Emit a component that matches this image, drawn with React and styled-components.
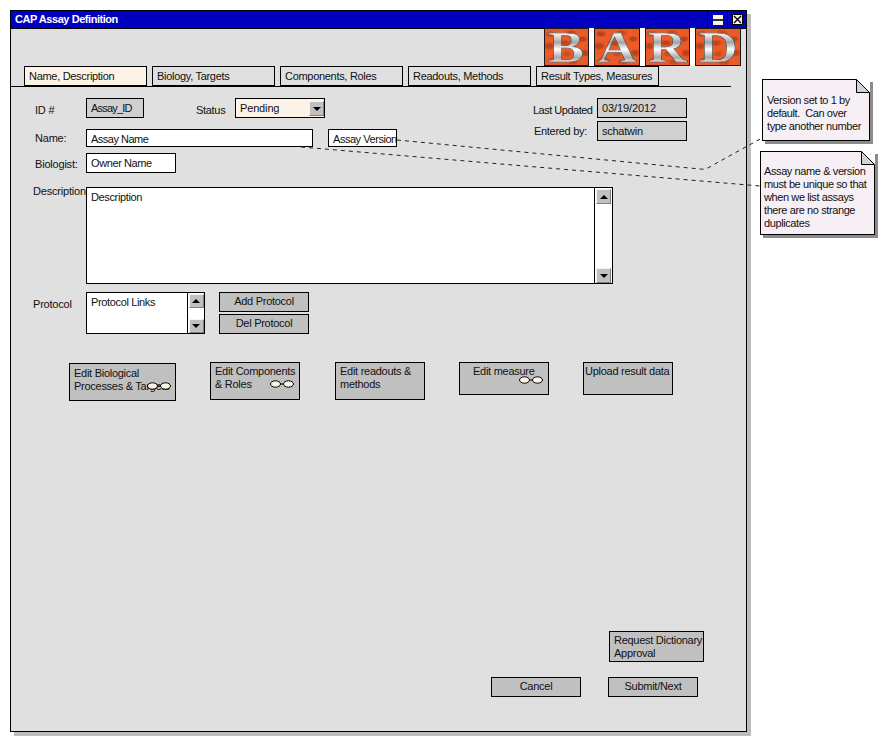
import React from "react";
import styled, { createGlobalStyle } from "styled-components";

const Global = createGlobalStyle`
  html, body { margin: 0; padding: 0; background: #fff; }
  body { font-family: "Liberation Sans", Arial, sans-serif; font-size: 11px; color: #111; }
  * { box-sizing: border-box; }
`;

const Canvas = styled.div`
  position: relative;
  width: 884px;
  height: 741px;
  padding: 10px 0 0 10px;
  overflow: hidden;
`;

const Window = styled.div`
  width: 737px;
  height: 722px;
  border: 1px solid #000;
  background: #e0e0e0;
  box-shadow: 4px 4px 0 #bdbdbd;
  display: flex;
  flex-direction: column;
`;

const TitleBar = styled.div`
  flex: none;
  height: 18px;
  background: #0000c0;
  border-bottom: 1px solid #000;
  display: flex;
  align-items: stretch;
  padding-left: 4px;
`;

const Title = styled.div`
  flex: 1;
  color: #fff;
  font-weight: bold;
  letter-spacing: -0.45px;
  line-height: 17px;
`;

const WinControl = styled.div`
  flex: none;
  width: ${(p) => p.$w}px;
  border-left: 1px solid #000;
  display: flex;
  align-items: center;
  justify-content: center;
`;

const Header = styled.div`
  flex: none;
  height: 37px;
  display: flex;
  justify-content: flex-end;
  padding-right: 5px;
`;

const Logo = styled.div`
  display: flex;
  gap: 5px;
  height: 38px;
  margin-top: -1px;
  background: #fff;
`;

const Tile = styled.div`
  width: ${(p) => p.$w}px;
  height: 38px;
  border: 1px solid #1a1a1a;
  display: flex;
  align-items: center;
  justify-content: center;
  background-color: #ec5a28;
  background-image:
    radial-gradient(ellipse 7px 4px at 6px 5px, #b8431c 40%, transparent 85%),
    radial-gradient(ellipse 8px 4px at 26px 4px, #c2481e 40%, transparent 85%),
    radial-gradient(ellipse 6px 4px at 38px 10px, #b8431c 40%, transparent 85%),
    radial-gradient(ellipse 8px 5px at 4px 17px, #bc451c 40%, transparent 85%),
    radial-gradient(ellipse 8px 4px at 20px 14px, #bc451c 40%, transparent 85%),
    radial-gradient(ellipse 6px 5px at 40px 24px, #b8431c 40%, transparent 85%),
    radial-gradient(ellipse 8px 4px at 9px 31px, #bc451c 40%, transparent 85%),
    radial-gradient(ellipse 8px 4px at 28px 33px, #c2481e 40%, transparent 85%),
    radial-gradient(ellipse 6px 4px at 22px 25px, #c84e22 40%, transparent 85%);
`;

const Letter = styled.span`
  font-family: "Liberation Serif", "Times New Roman", serif;
  font-size: 45px;
  line-height: 38px;
  font-weight: bold;
  transform: scaleX(1.2);
  background: linear-gradient(180deg, #fafafa 14%, #a4a4a4 38%, #ffffff 56%, #a8a8a8 78%, #f0f0f0 92%);
  -webkit-background-clip: text;
  background-clip: text;
  color: transparent;
  -webkit-text-stroke: 0.5px #333;
`;

const TabRow = styled.div`
  flex: none;
  height: 21px;
  width: 720px;
  border-bottom: 1px solid #000;
  display: flex;
  gap: 5px;
  padding-left: 13px;
`;

const Tab = styled.div`
  width: 123px;
  height: 21px;
  border: 1px solid #000;
  border-bottom-width: 2px;
  background: ${(p) => (p.$active ? "#fdf3e6" : "#e0e0e0")};
  padding-left: 4px;
  letter-spacing: -0.3px;
  line-height: 18px;
  white-space: nowrap;
`;

const Form = styled.div`
  flex: 1;
  display: flex;
  flex-direction: column;
  padding: 11px 0 34px 22px;
`;

const TopSection = styled.div`
  display: flex;
`;

const LeftCol = styled.div`
  width: 500px;
  display: flex;
  flex-direction: column;
`;

const MetaCol = styled.div`
  display: flex;
  flex-direction: column;
  gap: 3px;
`;

const Row = styled.div`
  display: flex;
  align-items: flex-start;
  margin-top: ${(p) => p.$top || 0}px;
`;

const Label = styled.div`
  flex: none;
  width: ${(p) => p.$w || 53}px;
  padding-left: ${(p) => p.$inset || 0}px;
  margin-left: ${(p) => p.$gap || 0}px;
  margin-top: ${(p) => p.$down ?? 4}px;
  letter-spacing: ${(p) => p.$ls ?? -0.2}px;
  white-space: nowrap;
  line-height: 14px;
`;

const Field = styled.div`
  flex: none;
  width: ${(p) => p.$w}px;
  height: ${(p) => p.$h || 20}px;
  margin-left: ${(p) => p.$gap || 0}px;
  border: 1px solid #000;
  background: ${(p) => p.$bg || "#fff"};
  padding: 2px 0 0 4px;
  letter-spacing: ${(p) => p.$ls ?? -0.36}px;
  line-height: 14px;
  white-space: nowrap;
`;

const SelectBox = styled(Field)`
  position: relative;
`;

const Bevel = styled.div`
  background: #c0c0c0;
  border: 1px solid;
  border-color: #f4f4f4 #808080 #808080 #f4f4f4;
  display: flex;
  align-items: center;
  justify-content: center;
  width: ${(p) => p.$w || 15}px;
  height: ${(p) => p.$h || 15}px;
  flex: none;
`;

const SelectArrow = styled(Bevel)`
  position: absolute;
  top: 2px;
  right: 0;
`;

const Arrow = styled.div`
  width: 0;
  height: 0;
  border-left: 4px solid transparent;
  border-right: 4px solid transparent;
  ${(p) => (p.$up ? "border-bottom: 4px solid #000;" : "border-top: 4px solid #000;")}
`;

const ScrollField = styled(Field)`
  display: flex;
  justify-content: space-between;
  padding: 0;
`;

const ScrollText = styled.div`
  padding: 2px 0 0 4px;
`;

const ScrollBar = styled.div`
  flex: none;
  width: ${(p) => p.$w}px;
  border-left: 1px solid #000;
  display: flex;
  flex-direction: column;
  justify-content: space-between;
  align-items: center;
  padding: 1px 0 0;
  background: #fff;
`;

const BoxButton = styled.div`
  position: relative;
  flex: none;
  width: ${(p) => p.$w || 90}px;
  height: ${(p) => p.$h || 20}px;
  margin-top: ${(p) => p.$top || 0}px;
  margin-left: ${(p) => p.$left || 0}px;
  border: 1px solid #000;
  background: #c0c0c0;
  text-align: ${(p) => (p.$center ? "center" : "left")};
  padding: ${(p) => p.$pt ?? 2}px 0 0 ${(p) => p.$pl ?? 0}px;
  letter-spacing: -0.27px;
  line-height: 13px;
  white-space: pre;
`;

const ButtonStack = styled.div`
  display: flex;
  flex-direction: column;
  gap: 2px;
  margin-left: 14px;
`;

const LinkMark = styled.svg`
  position: absolute;
  left: ${(p) => p.$x}px;
  top: ${(p) => p.$y}px;
`;

const BottomArea = styled.div`
  margin-top: auto;
  display: flex;
  flex-direction: column;
`;

const Spread = styled.div`
  display: flex;
`;

const Note = styled.div`
  position: absolute;
  left: ${(p) => p.$x}px;
  top: ${(p) => p.$y}px;
  width: ${(p) => p.$w}px;
  height: ${(p) => p.$h}px;
  background: #f6f0f6;
  border: 1px solid #000;
  box-shadow: 3px 3px 0 #8c8c8c;
  padding: ${(p) => p.$pt}px 0 0 ${(p) => p.$pl}px;
  line-height: 13px;
  letter-spacing: -0.4px;
  white-space: pre;
`;

const Fold = styled.svg`
  position: absolute;
  top: -1px;
  right: -1px;
`;

const Connectors = styled.svg`
  position: absolute;
  left: 0;
  top: 0;
  pointer-events: none;
`;

function LinkIcon({ x, y }) {
  return (
    <LinkMark $x={x} $y={y} width="24" height="8" viewBox="0 0 24 8">
      <path d="M9 4h6" stroke="#000" />
      <ellipse cx="5.5" cy="4" rx="5" ry="3.2" fill="#fbf3e4" stroke="#000" />
      <ellipse cx="18.5" cy="4" rx="5" ry="3.2" fill="#fbf3e4" stroke="#000" />
    </LinkMark>
  );
}

function FoldCorner() {
  return (
    <Fold width="14" height="14" viewBox="0 0 14 14">
      <path d="M0 0H14V14Z" fill="#fff" />
      <path d="M.5 .5L13.5 13.5H.5Z" fill="#d2d2d2" stroke="#000" />
    </Fold>
  );
}

const tabs = [
  "Name, Description",
  "Biology, Targets",
  "Components, Roles",
  "Readouts, Methods",
  "Result Types, Measures",
];

const tiles = [
  ["B", 45],
  ["A", 46],
  ["R", 45],
  ["D", 46],
];

export default function App() {
  return (
    <Canvas>
      <Global />
      <Window>
        <TitleBar>
          <Title>CAP Assay Definition</Title>
          <WinControl $w={20}>
            <svg width="10" height="10" viewBox="0 0 10 10">
              <path d="M0 0h10v10H0z" fill="#fbf3e4" />
              <path d="M0 5h10" stroke="#000" strokeWidth="1.6" />
            </svg>
          </WinControl>
          <WinControl $w={19}>
            <svg width="11" height="11" viewBox="0 0 11 11">
              <path d="M.5.5h10v10H.5z" fill="#fbf3e4" stroke="#000" />
              <path d="M2 2l7 7M9 2l-7 7" stroke="#000" strokeWidth="1.3" />
            </svg>
          </WinControl>
        </TitleBar>
        <Header>
          <Logo>
            {tiles.map(([c, w]) => (
              <Tile key={c} $w={w}>
                <Letter>{c}</Letter>
              </Tile>
            ))}
          </Logo>
        </Header>
        <TabRow>
          {tabs.map((t, i) => (
            <Tab key={t} $active={i === 0}>
              {t}
            </Tab>
          ))}
        </TabRow>
        <Form>
          <TopSection>
            <LeftCol>
              <Row>
                <Label $inset={2} $down={5}>ID #</Label>
                <Field $w={58} $bg="#d0d0d0" $ls={-0.8}>Assay_ID</Field>
                <Label $w={39} $gap={52} $down={5} $ls={-0.3}>Status</Label>
                <SelectBox $w={90} $bg="#fdf3e6" $ls={-0.15}>
                  Pending
                  <SelectArrow $w={15} $h={15}>
                    <Arrow />
                  </SelectArrow>
                </SelectBox>
              </Row>
              <Row $top={11}>
                <Label $inset={2} $down={2}>Name:</Label>
                <Field $w={227} $h={18} $ls={-0.5}>Assay Name</Field>
                <Field $w={69} $h={18} $gap={15} $ls={-0.46}>Assay Version</Field>
              </Row>
              <Row $top={6}>
                <Label $inset={2}>Biologist:</Label>
                <Field $w={90} $ls={-0.4}>Owner Name</Field>
              </Row>
            </LeftCol>
            <MetaCol>
              <Row>
                <Label $w={64} $down={5} $ls={-0.5}>Last Updated</Label>
                <Field $w={90} $bg="#d0d0d0" $ls={-0.1}>03/19/2012</Field>
              </Row>
              <Row>
                <Label $w={64} $inset={1} $down={3} $ls={-0.3}>Entered by:</Label>
                <Field $w={90} $bg="#d0d0d0" $ls={-0.25}>schatwin</Field>
              </Row>
            </MetaCol>
          </TopSection>
          <Row $top={14}>
            <Label $down={-3}>Description</Label>
            <ScrollField $w={527} $h={97}>
              <ScrollText>Description</ScrollText>
              <ScrollBar $w={18}>
                <Bevel $w={15} $h={15}><Arrow $up /></Bevel>
                <Bevel $w={15} $h={15}><Arrow /></Bevel>
              </ScrollBar>
            </ScrollField>
          </Row>
          <Row $top={8}>
            <Label $down={5}>Protocol</Label>
            <ScrollField $w={119} $h={42}>
              <ScrollText>Protocol Links</ScrollText>
              <ScrollBar $w={17}>
                <Bevel $w={15} $h={14}><Arrow $up /></Bevel>
                <Bevel $w={15} $h={14}><Arrow /></Bevel>
              </ScrollBar>
            </ScrollField>
            <ButtonStack>
              <BoxButton $center>Add Protocol</BoxButton>
              <BoxButton $center>Del Protocol</BoxButton>
            </ButtonStack>
          </Row>
          <Row $top={28}>
            <BoxButton $w={107} $h={38} $top={1} $left={36} $pl={4} $pt={3}>
              {"Edit Biological\nProcesses & Targets"}
              <LinkIcon x={77} y={18} />
            </BoxButton>
            <BoxButton $h={38} $left={34} $pl={4} $pt={2}>
              {"Edit Components\n& Roles"}
              <LinkIcon x={59} y={17} />
            </BoxButton>
            <BoxButton $h={38} $left={35} $pl={4} $pt={2}>
              {"Edit readouts &\nmethods"}
            </BoxButton>
            <BoxButton $h={33} $left={34} $pl={13} $pt={2}>
              Edit measure
              <LinkIcon x={59} y={13} />
            </BoxButton>
            <BoxButton $h={33} $left={34} $pl={1} $pt={2}>
              Upload result data
            </BoxButton>
          </Row>
          <BottomArea>
            <BoxButton $w={95} $h={31} $left={576} $pl={4} $pt={2}>
              {"Request Dictionary\nApproval"}
            </BoxButton>
            <Spread>
              <BoxButton $left={458} $top={15} $center $pt={2}>Cancel</BoxButton>
              <BoxButton $left={27} $top={15} $center $pt={2}>Submit/Next</BoxButton>
            </Spread>
          </BottomArea>
        </Form>
      </Window>

      <Connectors width="884" height="741" viewBox="0 0 884 741">
        <path d="M397 140L700 169Q706 170 713 165L762 138" fill="none" stroke="#222" strokeDasharray="4 4" />
        <path d="M301 147L760 186" fill="none" stroke="#222" strokeDasharray="4 4" />
      </Connectors>

      <Note $x={762} $y={79} $w={108} $h={62} $pt={14} $pl={4}>
        {"Version set to 1 by\ndefault.  Can over\ntype another number"}
        <FoldCorner />
      </Note>
      <Note $x={760} $y={151} $w={115} $h={84} $pt={13} $pl={3}>
        {"Assay name & version\nmust be unique so that\nwhen we list assays\nthere are no strange\nduplicates"}
        <FoldCorner />
      </Note>
    </Canvas>
  );
}
